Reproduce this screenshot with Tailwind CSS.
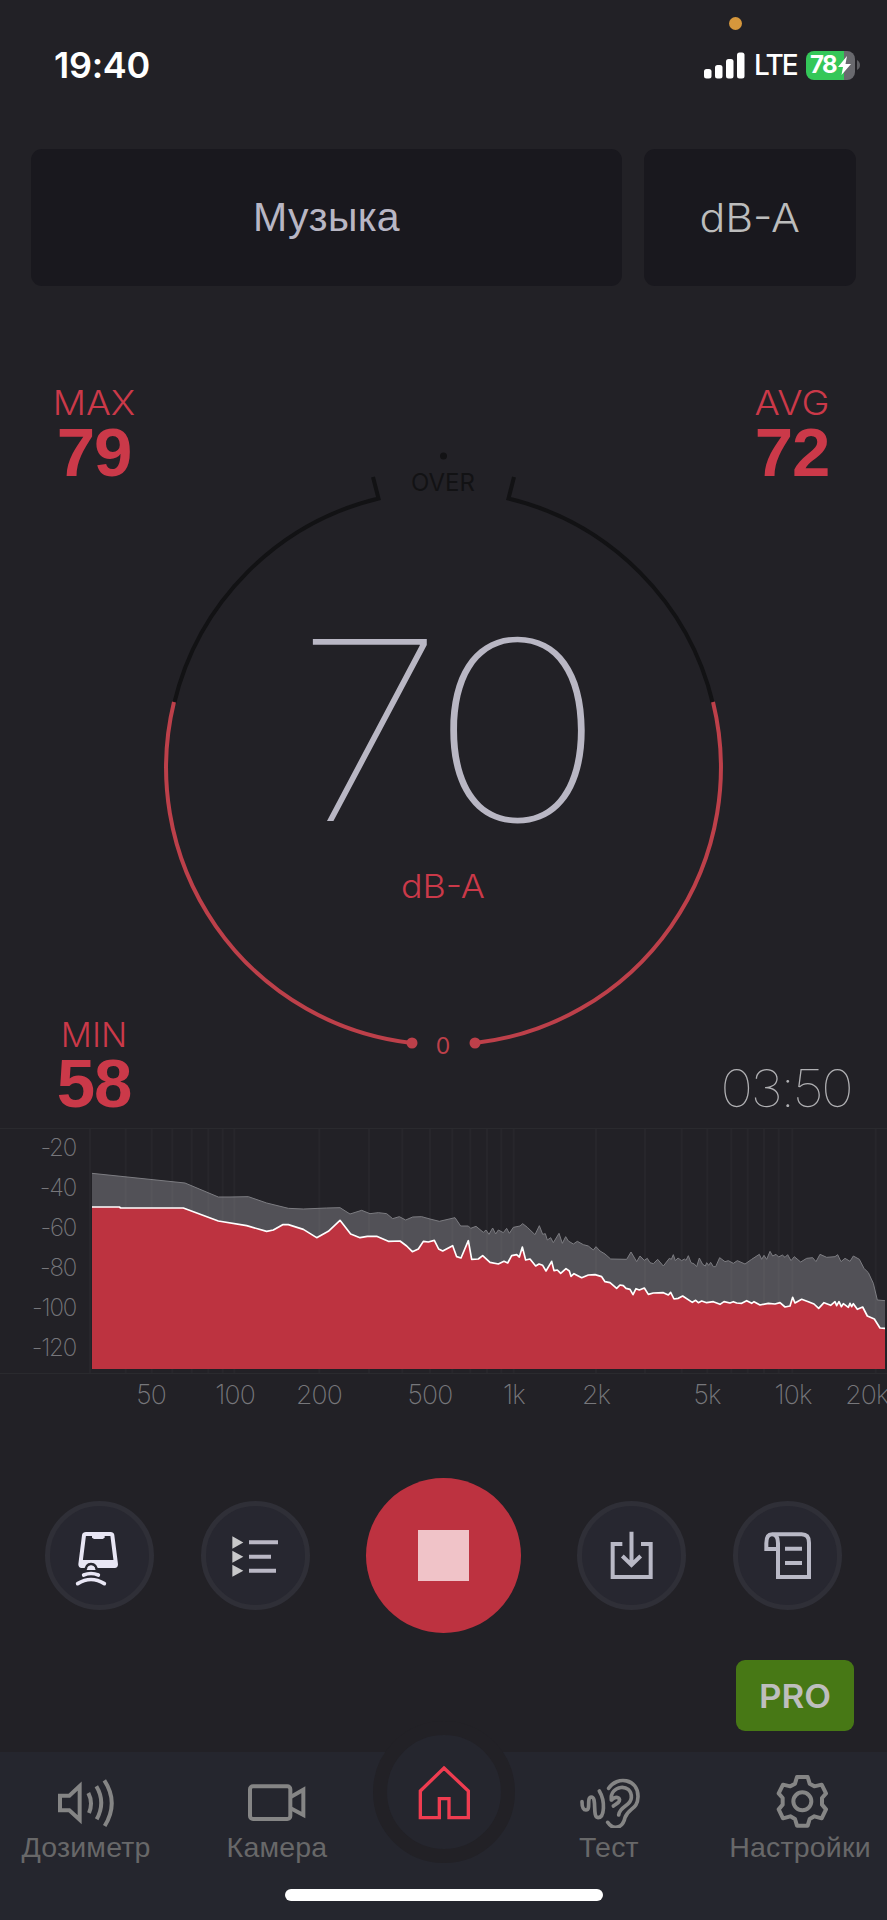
<!DOCTYPE html>
<html lang="ru">
<head>
<meta charset="utf-8">
<title>Шумомер</title>
<script src="https://cdn.jsdelivr.net/npm/@tailwindcss/browser@4"></script>
</head>
<body class="bg-[#222126]">
<div class="w-[887px] h-[1920px] overflow-hidden bg-[#222126] flex flex-col font-['Inter',sans-serif]">

  <!-- Status bar -->
  <header class="h-[149px] shrink-0 relative flex justify-between pt-[45px] pl-[54px] pr-[27px]">
    <span class="absolute left-[729px] top-[17px] size-[13px] rounded-full bg-[#d6973c]"></span>
    <div class="h-10 flex items-center text-[36px] leading-none font-semibold text-white tracking-[-0.300px]"><span>19:40</span></div>
    <div class="h-10 flex items-center">
      <svg class="w-[41px] h-[27px]" viewBox="0 0 41 27" fill="#fff"><rect x="0" y="17" width="7.5" height="9.5" rx="2.5"/><rect x="11" y="13" width="7.5" height="13.500" rx="2.500"/><rect x="22" y="7" width="7.500" height="19.500" rx="2.500"/><rect x="33" y="0.500" width="7.500" height="26" rx="2.500"/></svg>
      <span class="ml-[9px] w-[42px] text-[28px] leading-none font-medium text-white tracking-[-1.800px]">LTE</span>
      <div class="ml-[10px] w-[49px] h-[29px] rounded-[8px] bg-[linear-gradient(90deg,#34c759_0_38px,#69696e_38px)] flex items-center pl-[4px]">
        <span class="text-[24px] leading-none font-bold text-white tracking-[-1.500px] w-[28px]">78</span>
        <svg class="w-[13px] h-[19px]" viewBox="0 0 13 19" fill="#fff"><path d="M9 0 0 11h5L3.500 19 13 8H7.500z"/></svg>
      </div>
      <svg class="ml-[2px] w-[3px] h-[10px]" viewBox="0 0 3 10"><path d="M0 0c4 2 4 8 0 10z" fill="#5d5d62"/></svg>
    </div>
  </header>

  <!-- Mode selectors -->
  <section class="h-[137px] shrink-0 flex gap-[22px] pl-[31px] pr-[31px]">
    <button class="w-[591px] rounded-[11px] bg-[#19181e] font-['Liberation_Sans',sans-serif] text-[41px] text-[#b8b6c4] tracking-[0.300px] pt-[1px]">Музыка</button>
    <button class="flex-1 rounded-[11px] bg-[#19181e] text-[39px] font-light text-[#bcbcbc] pt-[2px]"><span class="inline-block scale-x-[1.1]">dB-A</span></button>
  </section>

  <!-- Level meter -->
  <main class="h-[842px] shrink-0 flex pl-[30px]">
    <aside class="w-[128px] pt-[100px] pb-[10px] flex flex-col justify-between text-center text-[#cb3949]">
      <div>
        <div class="text-[34.500px] leading-none font-light scale-x-[1.070]">MAX</div>
        <div class="-mt-[3px] text-[69px] leading-none font-bold tracking-[-1px] font-['Liberation_Sans',sans-serif]">79</div>
      </div>
      <div>
        <div class="text-[34.500px] leading-none font-light">MIN</div>
        <div class="-mt-[3px] text-[69px] leading-none font-bold tracking-[-1px] font-['Liberation_Sans',sans-serif]">58</div>
      </div>
    </aside>
    <svg class="w-[571px] h-[842px] shrink-0" viewBox="158 286 571 842" fill="none" stroke-width="4">
      <path d="M373 477 378.500 498.500A277 277 0 0 0 174 704" stroke="#121214"/>
      <path d="M514 477 508.500 498.500A277 277 0 0 1 713 704" stroke="#121214"/>
      <path d="M174 702A277 277 0 0 0 412 1043" stroke="#bd404a"/>
      <path d="M713 702A277 277 0 0 1 475 1043" stroke="#bd404a"/>
      <circle cx="412" cy="1043" r="5.500" fill="#bd404a"/>
      <circle cx="475" cy="1043" r="5.500" fill="#bd404a"/>
      <circle cx="443.500" cy="456" r="3.500" fill="#121214"/>
      <text x="411" y="491" font-size="24" textLength="64" lengthAdjust="spacingAndGlyphs" fill="#121214">OVER</text>
      <text x="443" y="1054" font-size="23" text-anchor="middle" fill="#bd404a">0</text>
      <g font-size="250" font-weight="100" fill="#b9b7c4">
        <text transform="translate(296 821) scale(1.080 1)">7</text>
        <text transform="translate(428.500 821) scale(1.205 1)">0</text>
      </g>
      <text x="401" y="898" font-size="33" font-weight="300" textLength="84" lengthAdjust="spacingAndGlyphs" fill="#cb3949">dB-A</text>
    </svg>
    <aside class="w-[126px] shrink-0 pt-[100px] pb-[14px] flex flex-col justify-between text-center text-[#cb3949]">
      <div>
        <div class="text-[34.500px] leading-none font-light scale-x-[1.090]">AVG</div>
        <div class="-mt-[3px] text-[69px] leading-none font-bold tracking-[-1px] font-['Liberation_Sans',sans-serif]">72</div>
      </div>
      <div class="text-[51.500px] leading-none font-thin tracking-[-2.500px] text-[#b0b0b3] flex justify-end"><span class="mr-[4px] origin-right scale-x-[1.080]">03:50</span></div>
    </aside>
  </main>

  <!-- Frequency spectrum -->
  <section class="h-[246px] shrink-0 border-y border-[#2a2a2e] flex">
    <div class="w-[76px] shrink-0 flex flex-col text-right text-[24px] font-extralight tracking-[-1.200px] text-[#77777b]">
      <span class="h-[38px] leading-[37px]">-20</span>
      <span class="h-[40px] leading-[41px]">-40</span>
      <span class="h-[40px] leading-[41px]">-60</span>
      <span class="h-[40px] leading-[41px]">-80</span>
      <span class="h-[40px] leading-[42px]">-100</span>
      <span class="h-[40px] leading-[42px]">-120</span>
    </div>
    <svg class="w-[811px] h-[244px]" viewBox="228 27 2433 732">
      <path d="M276 160 555 189 655 231 690 231 745 230 800 249 865 265 910 267 980 264 1020 263 1050 282 1085 271 1110 281 1135 278 1160 281 1178 296 1198 290 1217 300 1238 291 1265 290 1290 297 1318 304 1335 300 1365 293 1382 318 1405 318 1412 325 1428 319 1450 337 1458 330 1467 343 1478 324 1487 342 1495 330 1510 338 1520 325 1528 340 1540 322 1560 318 1568 311 1582 322 1605 344 1618 317 1628 343 1636 341 1642 360 1652 353 1660 368 1677 340 1687 370 1697 350 1705 363 1720 372 1732 364 1750 374 1765 378 1780 390 1788 380 1800 393 1815 402 1832 417 1880 418 1893 396 1910 425 1920 408 1933 421 1942 415 1950 428 1960 431 1973 418 1990 438 2008 415 2014 418 2020 404 2026 422 2034 414 2045 422 2053 417 2058 421 2065 407 2073 428 2083 432 2090 440 2098 414 2108 433 2116 438 2120 428 2126 436 2132 427 2140 440 2147 440 2159 413 2175 425 2185 422 2200 430 2212 422 2235 432 2255 418 2278 403 2285 418 2292 406 2300 418 2310 394 2318 408 2328 403 2336 411 2347 405 2355 412 2363 404 2373 422 2383 410 2402 426 2420 415 2438 413 2448 425 2460 403 2480 412 2505 410 2513 404 2523 425 2535 415 2550 424 2560 408 2578 418 2592 445 2605 458 2620 490 2632 540 2655 542 2655 747 276 747z" fill="#525157"/>
      <path d="M276 160 555 189 655 231 690 231 745 230 800 249 865 265 910 267 980 264 1020 263 1050 282 1085 271 1110 281 1135 278 1160 281 1178 296 1198 290 1217 300 1238 291 1265 290 1290 297 1318 304 1335 300 1365 293 1382 318 1405 318 1412 325 1428 319 1450 337 1458 330 1467 343 1478 324 1487 342 1495 330 1510 338 1520 325 1528 340 1540 322 1560 318 1568 311 1582 322 1605 344 1618 317 1628 343 1636 341 1642 360 1652 353 1660 368 1677 340 1687 370 1697 350 1705 363 1720 372 1732 364 1750 374 1765 378 1780 390 1788 380 1800 393 1815 402 1832 417 1880 418 1893 396 1910 425 1920 408 1933 421 1942 415 1950 428 1960 431 1973 418 1990 438 2008 415 2014 418 2020 404 2026 422 2034 414 2045 422 2053 417 2058 421 2065 407 2073 428 2083 432 2090 440 2098 414 2108 433 2116 438 2120 428 2126 436 2132 427 2140 440 2147 440 2159 413 2175 425 2185 422 2200 430 2212 422 2235 432 2255 418 2278 403 2285 418 2292 406 2300 418 2310 394 2318 408 2328 403 2336 411 2347 405 2355 412 2363 404 2373 422 2383 410 2402 426 2420 415 2438 413 2448 425 2460 403 2480 412 2505 410 2513 404 2523 425 2535 415 2550 424 2560 408 2578 418 2592 445 2605 458 2620 490 2632 540 2655 542" fill="none" stroke="#7c7c81" stroke-width="3"/>
      <path d="M270 27V759M377 27V759M455 27V759M517 27V759M575 27V759M625 27V759M668 27V759M703 27V759M958 27V759M1107 27V759M1207 27V759M1290 27V759M1357 27V759M1411 27V759M1461 27V759M1504 27V759M1541 27V759M1788 27V759M1935 27V759M2045 27V759M2122 27V759M2194 27V759M2243 27V759M2292 27V759M2336 27V759M2377 27V759M2627 27V759" stroke="#fff" stroke-opacity=".022" stroke-width="6" fill="none"/>
      <path d="M276 261 358 261 362 264 550 264 655 303 740 317 800 334 820 330 848 314 865 314 910 328 950 353 985 334 1020 301 1052 342 1080 353 1102 349 1130 349 1165 364 1200 363 1220 378 1237 395 1255 387 1270 364 1285 366 1303 361 1316 387 1328 393 1358 377 1370 410 1383 414 1405 362 1415 418 1435 417 1448 407 1470 427 1495 432 1512 424 1523 429 1535 407 1550 404 1558 411 1567 381 1577 420 1590 417 1607 438 1617 432 1628 436 1638 453 1655 424 1662 452 1672 450 1682 460 1698 446 1708 453 1713 469 1722 461 1745 473 1765 465 1785 464 1805 470 1815 485 1830 488 1850 505 1860 495 1870 497 1878 505 1890 508 1899 524 1908 506 1918 510 1933 504 1945 523 1960 519 1990 518 2005 525 2012 517 2022 537 2035 535 2048 528 2077 547 2087 541 2095 548 2105 543 2120 548 2140 545 2160 553 2172 545 2190 549 2200 545 2210 549 2225 550 2240 542 2255 550 2262 545 2280 555 2305 550 2325 552 2340 548 2355 561 2370 558 2378 532 2385 549 2405 538 2425 545 2442 552 2456 565 2472 548 2492 556 2505 545 2510 557 2517 545 2524 560 2530 551 2545 562 2550 550 2555 560 2560 551 2572 568 2588 561 2602 588 2623 597 2640 624 2655 625 2655 747 276 747z" fill="#bd3340"/>
      <path d="M276 261 358 261 362 264 550 264 655 303 740 317 800 334 820 330 848 314 865 314 910 328 950 353 985 334 1020 301 1052 342 1080 353 1102 349 1130 349 1165 364 1200 363 1220 378 1237 395 1255 387 1270 364 1285 366 1303 361 1316 387 1328 393 1358 377 1370 410 1383 414 1405 362 1415 418 1435 417 1448 407 1470 427 1495 432 1512 424 1523 429 1535 407 1550 404 1558 411 1567 381 1577 420 1590 417 1607 438 1617 432 1628 436 1638 453 1655 424 1662 452 1672 450 1682 460 1698 446 1708 453 1713 469 1722 461 1745 473 1765 465 1785 464 1805 470 1815 485 1830 488 1850 505 1860 495 1870 497 1878 505 1890 508 1899 524 1908 506 1918 510 1933 504 1945 523 1960 519 1990 518 2005 525 2012 517 2022 537 2035 535 2048 528 2077 547 2087 541 2095 548 2105 543 2120 548 2140 545 2160 553 2172 545 2190 549 2200 545 2210 549 2225 550 2240 542 2255 550 2262 545 2280 555 2305 550 2325 552 2340 548 2355 561 2370 558 2378 532 2385 549 2405 538 2425 545 2442 552 2456 565 2472 548 2492 556 2505 545 2510 557 2517 545 2524 560 2530 551 2545 562 2550 550 2555 560 2560 551 2572 568 2588 561 2602 588 2623 597 2640 624 2655 625" fill="none" stroke="#fff" stroke-width="5" stroke-linejoin="round"/>
    </svg>
  </section>
  <div class="h-[104px] shrink-0">
    <svg class="w-[887px] h-[44px]" viewBox="0 0 887 44" font-size="26.500" font-weight="200" fill="#77777b" text-anchor="middle" letter-spacing="-0.800">
      <text x="151" y="30">50</text><text x="235" y="30">100</text><text x="319" y="30">200</text><text x="430" y="30">500</text><text x="514" y="30">1k</text><text x="596" y="30">2k</text><text x="707" y="30">5k</text><text x="793" y="30">10k</text><text x="867" y="30">20k</text>
    </svg>
  </div>

  <!-- Transport controls -->
  <section class="h-[155px] shrink-0 flex items-center justify-center gap-[56px]">
    <div class="flex gap-[47px]">
      <button class="size-[109px] rounded-full border-[5px] border-[#2f2f37] bg-[#272730]">
        <svg class="size-[99px]" viewBox="90 108 297 297" fill="none" stroke="#e8e6f4">
          <path d="M198 192H272Q276 192 277 196L288 283Q288 288 284 288H185Q181 288 181 283L192 196Q193 192 198 192Z" stroke-width="12"/>
          <path d="M216 196H254V203L248 207H222L216 203Z" fill="#e8e6f4" stroke="none"/>
          <path d="M184 281H286" stroke-width="22"/>
          <path d="M196 305Q197 282 213 282Q230 282 231 305" stroke="#272730" stroke-width="7"/>
          <path d="M200 300Q203 287 213 287Q224 287 227 300Z" fill="#e8e6f4" stroke="none"/>
          <path d="M191 315Q213 306 235 315" stroke-width="11" stroke-linecap="round"/>
          <path d="M173 341Q213 316 253 341" stroke-width="11" stroke-linecap="round"/>
        </svg>
      </button>
      <button class="size-[109px] rounded-full border-[5px] border-[#2f2f37] bg-[#272730]">
        <svg class="size-[99px]" viewBox="558 108 297 297">
          <path d="M637 199 670 217.500 637 236ZM637 242 670 260 637 278ZM637 284 670 302 637 320Z" fill="#c8c8ca"/>
          <path d="M687 217H774M687 260H753M687 302H768" stroke="#bab8c5" stroke-width="12"/>
        </svg>
      </button>
    </div>
    <button class="size-[155px] rounded-full bg-[#bd3240] flex items-center justify-center"><span class="size-[51px] bg-[#f0c3c8]"></span></button>
    <div class="flex gap-[47px]">
      <button class="size-[109px] rounded-full border-[5px] border-[#2f2f37] bg-[#272730]">
        <svg class="size-[99px]" viewBox="426 108 297 297" fill="none" stroke="#b9b9c6" stroke-width="12">
          <path d="M547 222H518V321H632V222H603M574.500 185V285M547 258 574.500 285 602 258"/>
        </svg>
      </button>
      <button class="size-[109px] rounded-full border-[5px] border-[#2f2f37] bg-[#272730]">
        <svg class="size-[99px]" viewBox="894 108 297 297" fill="none" stroke="#b9b9c6" stroke-width="12">
          <path d="M995 193H1085Q1107 193 1107 218V321H1014V220Q1014 193 996 193Q979 193 979 220V237H1012M1035 236H1086M1035 279H1086"/>
        </svg>
      </button>
    </div>
  </section>

  <div class="h-[119px] shrink-0 pt-[27px] pr-[33px] flex justify-end">
    <button class="w-[118px] h-[71px] rounded-[9px] bg-[#477815] text-[32px] font-semibold text-[#bebebe] pt-[2px]"><span class="inline-block scale-x-[1.090]">PRO</span></button>
  </div>

  <!-- Tab bar -->
  <nav class="flex-1 bg-[#25262e] relative flex font-['Liberation_Sans',sans-serif] text-[28.500px] leading-none text-[#686869] tracking-[0.200px]">
    <a class="w-[172px] flex flex-col items-center pt-[23px]">
      <svg class="w-[60px] h-[53px]" viewBox="169 135 180 159" fill="none" stroke="#858585" stroke-width="12">
        <path d="M181 197H209L240 168V269L209 241H181Z"/><path d="M266 189Q281 218 268 249M290 169Q319 217 291 268M314 151Q358 218 315 288"/>
      </svg>
      <span class="mt-[5px]">Дозиметр</span>
    </a>
    <a class="w-[210px] flex flex-col items-center pt-[23px]">
      <svg class="w-[60px] h-[53px]" viewBox="741 135 180 159" fill="none" stroke="#858585" stroke-width="12">
        <rect x="750" y="169" width="121" height="98" rx="9"/><path d="M872 201 910 179V255L872 235"/>
      </svg>
      <span class="mt-[5px]">Камера</span>
    </a>
    <a class="w-[123px] flex justify-center">
      <span class="-mt-[31px] size-[142px] shrink-0 rounded-full border-[14px] border-[#222126] bg-[#25262e] flex items-center justify-center">
        <svg class="size-[60px]" viewBox="1241 98 180 180" fill="none" stroke="#ef3c50" stroke-width="10">
          <path d="M1331 116 1404 185V265H1346V208H1317V265H1260V185Z"/>
        </svg>
      </span>
    </a>
    <a class="w-[208px] flex flex-col items-center pt-[23px]">
      <svg class="w-[62px] h-[53px]" viewBox="24 30 186 159" fill="none" stroke="#858585" stroke-width="11" stroke-linecap="round" stroke-linejoin="round">
        <path d="M36 110C36 122 38 135 48 135C64 135 48 97 64 96C82 96 66 158 84 158C104 158 106 108 88 78"/>
        <path d="M116 70C140 32 205 40 204 95C203 135 175 128 165 158C158 192 128 195 113 172"/>
        <path d="M124 105C118 60 186 52 184 98C183 124 150 122 146 150"/>
        <path d="M126 104C136 92 152 98 148 108C145 116 134 118 130 123"/>
      </svg>
      <span class="mt-[5px]">Тест</span>
    </a>
    <a class="w-[174px] flex flex-col items-center pt-[23px]">
      <svg class="w-[60px] h-[53px]" viewBox="990 135 180 159" fill="none" stroke="#858585" stroke-width="12" stroke-linejoin="round">
        <circle cx="1087" cy="214" r="27"/>
        <path d="M1071 141H1103L1109 161 1123 169 1145 164 1158 190 1146 204V224L1158 238 1145 265 1123 259 1109 267 1103 287H1071L1065 267 1051 259 1029 265 1016 238 1028 224V204L1016 190 1029 164 1051 169 1065 161Z"/>
      </svg>
      <span class="mt-[5px]">Настройки</span>
    </a>
    <span class="absolute left-[285px] top-[137px] w-[318px] h-[12px] rounded-full bg-white"></span>
  </nav>
</div>
</body>
</html>
